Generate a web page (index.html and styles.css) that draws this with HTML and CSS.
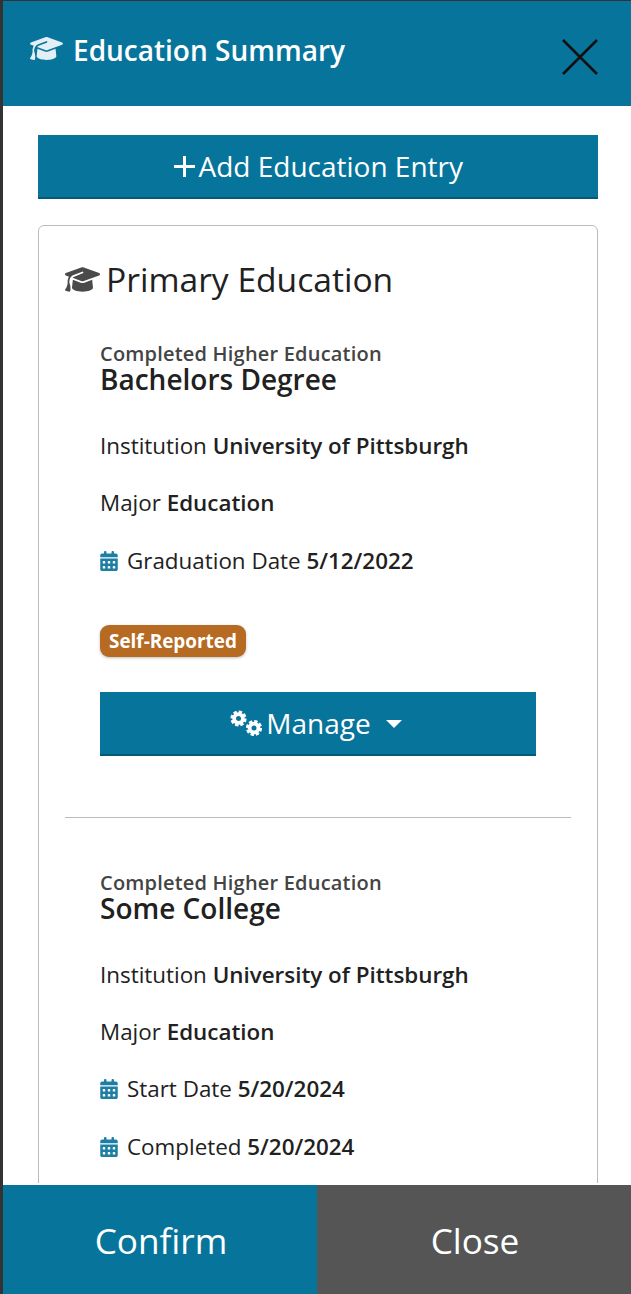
FILE: index.html
```html
<!DOCTYPE html>
<html lang="en">
<head>
<meta charset="utf-8">
<title>Education Summary</title>
<link rel="stylesheet" href="styles.css">
</head>
<body>
<svg class="defs" width="0" height="0" aria-hidden="true">
  <defs>
    <symbol id="cap" viewBox="0 32 640 448"><path d="M320 32c-8.1 0-16.1 1.4-23.7 4.1L15.8 137.4C6.3 140.9 0 149.9 0 160s6.3 19.1 15.8 22.6l57.9 20.9C57.3 229.3 48 259.8 48 291.9v28.1c0 28.4-10.8 57.7-22.3 80.8c-6.5 13-13.9 25.8-22.5 37.6C0 442.7-.9 448.3 .9 453.4s6 8.9 11.2 10.2l64 16c4.2 1.1 8.7 .3 12.4-2s6.3-6.1 7.1-10.4c8.6-42.8 4.3-81.2-2.1-108.7C90.3 344.3 86 329.8 80 316.5V291.9c0-30.2 10.2-58.7 27.9-81.5c12.9-15.5 29.6-28 49.2-35.7l157-61.7c8.2-3.2 17.5 .8 20.7 9s-.8 17.5-9 20.7l-157 61.7c-12.4 4.9-23.3 12.4-32.2 21.6l159.6 57.6c7.6 2.7 15.6 4.1 23.7 4.1s16.1-1.4 23.7-4.1L624.2 182.6c9.5-3.4 15.8-12.5 15.8-22.6s-6.3-19.1-15.8-22.6L343.7 36.1C336.1 33.4 328.1 32 320 32zM128 408c0 35.3 86 72 192 72s192-36.7 192-72L496.7 262.6 354.5 314c-11.1 4-22.8 6-34.5 6s-23.5-2-34.5-6L143.3 262.6 128 408z"/></symbol>
    <symbol id="cal" viewBox="0 0 448 512"><path d="M128 0c17.7 0 32 14.3 32 32V64H288V32c0-17.7 14.3-32 32-32s32 14.3 32 32V64h48c26.5 0 48 21.5 48 48v48H0V112C0 85.5 21.5 64 48 64H96V32c0-17.7 14.3-32 32-32zM0 192H448V464c0 26.5-21.5 48-48 48H48c-26.5 0-48-21.5-48-48V192zm64 80v32c0 8.8 7.2 16 16 16h32c8.8 0 16-7.2 16-16V272c0-8.8-7.2-16-16-16H80c-8.8 0-16 7.2-16 16zm128 0v32c0 8.8 7.2 16 16 16h32c8.8 0 16-7.2 16-16V272c0-8.8-7.2-16-16-16H208c-8.8 0-16 7.2-16 16zm144-16c-8.8 0-16 7.2-16 16v32c0 8.8 7.2 16 16 16h32c8.8 0 16-7.2 16-16V272c0-8.8-7.2-16-16-16H336zM64 400v32c0 8.8 7.2 16 16 16h32c8.8 0 16-7.2 16-16V400c0-8.8-7.2-16-16-16H80c-8.8 0-16 7.2-16 16zm144-16c-8.8 0-16 7.2-16 16v32c0 8.8 7.2 16 16 16h32c8.8 0 16-7.2 16-16V400c0-8.8-7.2-16-16-16H208zm112 16v32c0 8.8 7.2 16 16 16h32c8.8 0 16-7.2 16-16V400c0-8.8-7.2-16-16-16H336c-8.8 0-16 7.2-16 16z"/></symbol>
  </defs>
</svg>
<div class="panel">
  <header class="head">
    <h1 class="head-title"><svg class="head-cap"><use href="#cap"/></svg>Education Summary</h1>
    <button class="x" aria-label="Close"><svg viewBox="0 0 38 38"><path d="M2 2L36 36M36 2L2 36"/></svg></button>
  </header>
  <main class="scroll">
    <button class="btn add"><svg class="plus" viewBox="0 0 23 23"><path d="M11.5 1V22M1 11.5H22"/></svg>Add Education Entry</button>
    <section class="card">
      <h2 class="card-title"><svg class="card-cap"><use href="#cap"/></svg>Primary Education</h2>
      <article class="entry">
        <div class="kicker">Completed Higher Education</div>
        <h3 class="degree">Bachelors Degree</h3>
        <p class="row">Institution <b>University of Pittsburgh</b></p>
        <p class="row">Major <b>Education</b></p>
        <p class="row"><svg class="cal"><use href="#cal"/></svg>Graduation Date <b>5/12/2022</b></p>
        <span class="badge">Self-Reported</span>
        <button class="btn manage">
          <svg class="cogs" viewBox="0 0 32 26">
            <g class="gear"><circle cx="8.5" cy="8.5" r="4.4"/><circle class="teeth" cx="8.5" cy="8.5" r="6.6"/></g>
            <g class="gear"><circle cx="24" cy="18" r="4.4"/><circle class="teeth" cx="24" cy="18" r="6.6"/></g>
          </svg>Manage<span class="caret"></span>
        </button>
      </article>
      <hr class="rule">
      <article class="entry second">
        <div class="kicker">Completed Higher Education</div>
        <h3 class="degree">Some College</h3>
        <p class="row">Institution <b>University of Pittsburgh</b></p>
        <p class="row">Major <b>Education</b></p>
        <p class="row"><svg class="cal"><use href="#cal"/></svg>Start Date <b>5/20/2024</b></p>
        <p class="row"><svg class="cal"><use href="#cal"/></svg>Completed <b>5/20/2024</b></p>
      </article>
    </section>
  </main>
  <footer class="foot">
    <button class="foot-btn confirm">Confirm</button>
    <button class="foot-btn close">Close</button>
  </footer>
</div>
</body>
</html>
```
FILE: styles.css
```css
* { box-sizing: border-box; }
html, body { margin: 0; height: 100%; overflow: hidden; }
body { background: #333; font-family: "Open Sans", "Noto Sans", sans-serif; color: #212121; }
.defs { position: absolute; }
svg { fill: currentColor; }
button { font-family: inherit; border: 0; cursor: pointer; padding: 0; }
.panel { margin: 1px 0 0 3px; height: 1293px; background: #fff; display: flex; flex-direction: column; }
.head { flex: 0 0 105px; background: #07759b; display: flex; justify-content: space-between; padding: 24px 32px 0 27px; }
.head-title { margin: 0; color: #fff; font-size: 28px; line-height: 50px; font-weight: 600; display: flex; align-items: center; height: 50px; }
.head-cap { width: 33px; height: 23px; margin-right: 10px; color: #e3eff4; position: relative; top: -2px; }
.x { background: none; width: 38px; height: 38px; margin-top: 13px; }
.x svg { width: 38px; height: 38px; display: block; }
.x path { stroke: #111; stroke-width: 2.6; fill: none; }
.scroll { flex: 1 1 0; min-height: 0; margin-bottom: 2px; overflow: hidden; padding: 29px 33px 0 35px; }
.btn { display: flex; align-items: center; justify-content: center; width: 100%; height: 64px; background: #07759b; color: #fff; border-bottom: 2px solid #055a78; font-size: 28px; }
.plus { width: 23px; height: 23px; margin-right: 2.5px; }
.plus path { stroke: #fff; stroke-width: 3; fill: none; }
.card { margin-top: 26px; border: 1px solid #bbb; border-radius: 6px; padding: 31px 26px 40px; }
.card-title { margin: 0; font-size: 33.6px; line-height: 44px; font-weight: 400; display: flex; align-items: center; }
.card-cap { width: 35px; height: 25px; margin-right: 6px; color: #4a4a4a; flex: none; }
.entry { padding: 0 35px; margin-top: 44px; }
.second { margin-top: 56px; }
.kicker { font-size: 20px; line-height: 18px; font-weight: 600; color: #444; letter-spacing: .2px; }
.degree { margin: 0 0 36px; font-size: 28px; line-height: 32px; font-weight: 600; }
.row { margin: 0 0 27.3px; font-size: 22.4px; line-height: 30px; display: flex; align-items: center; white-space: pre; }
.row b { font-weight: 600; }
.cal { width: 18px; height: 20px; margin-right: 9px; color: #1d7fa3; flex: none; }
.badge { display: inline-block; margin-top: 22px; height: 32px; line-height: 32px; padding: 0 9px; border-radius: 9px; background: #b76a22; color: #fff; font-weight: 700; font-size: 18.9px; box-shadow: 0 1px 3px rgba(0,0,0,.25); vertical-align: top; }
.manage { margin-top: 35px; }
.cogs { width: 32px; height: 26px; margin-right: 4px; }
.gear circle { fill: none; stroke: #fff; stroke-width: 3.8; }
.gear .teeth { stroke-width: 3; stroke-dasharray: 3.3 1.88; }
.caret { width: 0; height: 0; margin: 3px 4px 0 15px; border-style: solid; border-width: 8px 8px 0; border-color: #fff transparent transparent; }
.rule { margin: 61px 0 0; border: 0; border-top: 1px solid #bbb; }
.foot { flex: 0 0 109px; display: flex; }
.foot-btn { flex: 1 1 0; color: #fff; font-size: 35.2px; text-indent: 2px; }
.confirm { background: #07759b; }
.close { background: #555; }
```
